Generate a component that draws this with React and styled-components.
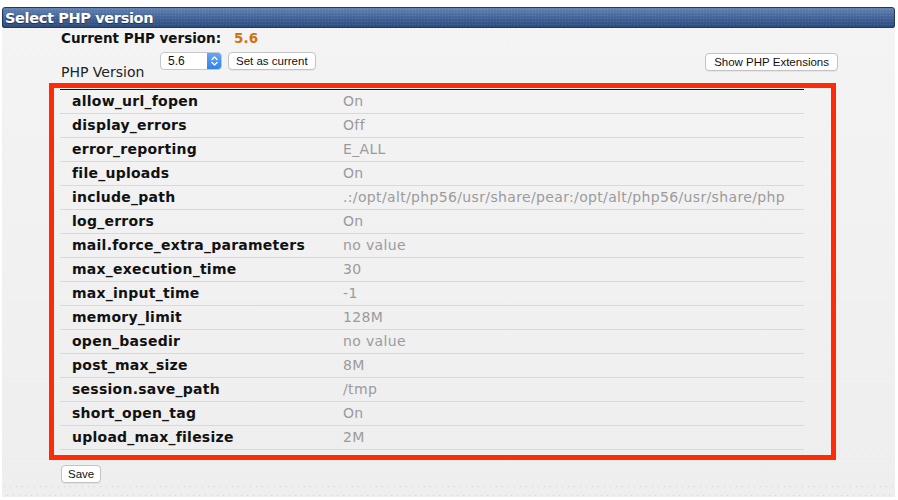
import React from "react";
import styled, { createGlobalStyle } from "styled-components";

const Global = createGlobalStyle`
  html, body { margin: 0; padding: 0; background: #ffffff; }
  body { font-family: "DejaVu Sans", Verdana, sans-serif; }
`;

const settings = [
  ["allow_url_fopen", "On"],
  ["display_errors", "Off"],
  ["error_reporting", "E_ALL"],
  ["file_uploads", "On"],
  ["include_path", ".:/opt/alt/php56/usr/share/pear:/opt/alt/php56/usr/share/php"],
  ["log_errors", "On"],
  ["mail.force_extra_parameters", "no value"],
  ["max_execution_time", "30"],
  ["max_input_time", "-1"],
  ["memory_limit", "128M"],
  ["open_basedir", "no value"],
  ["post_max_size", "8M"],
  ["session.save_path", "/tmp"],
  ["short_open_tag", "On"],
  ["upload_max_filesize", "2M"],
];

const Page = styled.div`
  width: 898px;
  height: 500px;
  padding-top: 7px;
  box-sizing: border-box;
  overflow: hidden;
`;

const Panel = styled.section`
  margin: 0 3px 0 2px;
  background: linear-gradient(#f4f4f4, #eeeeee);
  height: 490px;
  display: flex;
  flex-direction: column;
`;

const TitleBar = styled.h1`
  margin: 0;
  height: 21px;
  box-sizing: border-box;
  padding: 1px 0 0 2px;
  border: 1px solid #22395e;
  border-radius: 3px 3px 2px 2px;
  background:
    radial-gradient(circle, rgba(255, 255, 255, 0.12) 0.6px, transparent 0.8px) 0 0 / 3px 3px,
    linear-gradient(#6383b2, #44649a 50%, #2d4c7d);
  color: #ffffff;
  font-family: "DejaVu Sans", Verdana, sans-serif;
  font-size: 14.5px;
  font-weight: bold;
  line-height: 18px;
  letter-spacing: -0.35px;
  text-shadow: 0 1px 1px rgba(0, 0, 0, 0.45);
`;

const Content = styled.div`
  flex: 1;
  padding: 1px 0 0 47px;
  display: flex;
  flex-direction: column;
`;

const Current = styled.div`
  padding-left: 12px;
  font-size: 13.5px;
  font-weight: bold;
  color: #111111;
  line-height: 18px;
  height: 18px;
`;

const VersionNumber = styled.span`
  color: #d0730f;
  margin-left: 13px;
`;

const Controls = styled.div`
  display: flex;
  align-items: flex-start;
  padding-left: 12px;
  margin-top: 5px;
  width: 789px;
  box-sizing: border-box;
`;

const Label = styled.span`
  font-size: 14px;
  line-height: 16px;
  color: #222222;
  margin-top: 12px;
  width: 99px;
`;

const SelectBox = styled.div`
  width: 62px;
  height: 18px;
  box-sizing: border-box;
  border: 1px solid #c6c6c6;
  border-radius: 4px;
  background: #ffffff;
  display: flex;
  align-items: center;
  justify-content: space-between;
  font-family: "Liberation Sans", Arial, sans-serif;
  font-size: 12px;
  color: #111111;
  padding-left: 7px;
  overflow: hidden;
`;

const Stepper = styled.span`
  width: 15px;
  height: 18px;
  margin-right: -1px;
  background: linear-gradient(#6aa8f6, #2f7ee8);
  display: flex;
  align-items: center;
  justify-content: center;
`;

const Button = styled.button`
  height: 18px;
  margin: ${(p) => p.$m || "0"};
  padding: 0 ${(p) => p.$px || 7}px;
  border: 1px solid #c3c3c3;
  border-radius: 4px;
  background: #ffffff;
  font-family: "Liberation Sans", Arial, sans-serif;
  font-size: 11.5px;
  color: #111111;
  line-height: 16px;
  box-shadow: 0 1px 0 rgba(0, 0, 0, 0.05);
`;

const Spacer = styled.div`
  flex: 1;
`;

const Frame = styled.div`
  margin-top: 3px;
  width: 787px;
  box-sizing: border-box;
  border: 5px solid #fd2b06;
  padding: 0 27px 5px 6px;
`;

const Table = styled.div`
  border-top: 1px solid #111111;
  margin-top: 1px;
`;

const Row = styled.div`
  display: grid;
  grid-template-columns: 283px 1fr;
  height: 24px;
  box-sizing: border-box;
  border-bottom: 1px solid #d9d9d9;
  align-items: center;
  font-size: 14px;
  line-height: 23px;
  white-space: nowrap;
`;

const Name = styled.span`
  padding-left: 12px;
  font-weight: bold;
  letter-spacing: 0.25px;
  color: #111111;
`;

const Value = styled.span`
  color: #9b9b9b;
  letter-spacing: 0.35px;
`;

const Footer = styled.div`
  display: flex;
  padding: 5px 0 0 12px;
`;

const Dots = styled.div`
  margin-top: auto;
  height: 11px;
  background:
    linear-gradient(to right, #d2d2d2 1px, transparent 1px) 2px 0 / 6px 1px repeat-x,
    linear-gradient(to right, #d6d6d6 1px, transparent 1px) 5px 9px / 6px 1px repeat-x;
`;

const Chevrons = () => (
  <svg width="9" height="12" viewBox="0 0 9 12" fill="none" stroke="#ffffff" strokeWidth="1.4" strokeLinecap="round" strokeLinejoin="round">
    <path d="M2 4.5 L4.5 2 L7 4.5" />
    <path d="M2 7.5 L4.5 10 L7 7.5" />
  </svg>
);

export default function App() {
  return (
    <>
      <Global />
      <Page>
        <Panel>
          <TitleBar>Select PHP version</TitleBar>
          <Content>
            <Current>
              Current PHP version:<VersionNumber>5.6</VersionNumber>
            </Current>
            <Controls>
              <Label>PHP Version</Label>
              <SelectBox>
                5.6
                <Stepper>
                  <Chevrons />
                </Stepper>
              </SelectBox>
              <Button $m="0 0 0 6px" $px={7}>Set as current</Button>
              <Spacer />
              <Button $m="1px 0 0 0" $px={8}>Show PHP Extensions</Button>
            </Controls>
            <Frame>
              <Table>
                {settings.map(([name, value]) => (
                  <Row key={name}>
                    <Name>{name}</Name>
                    <Value>{value}</Value>
                  </Row>
                ))}
              </Table>
            </Frame>
            <Footer>
              <Button $px={6}>Save</Button>
            </Footer>
          </Content>
          <Dots />
        </Panel>
      </Page>
    </>
  );
}
